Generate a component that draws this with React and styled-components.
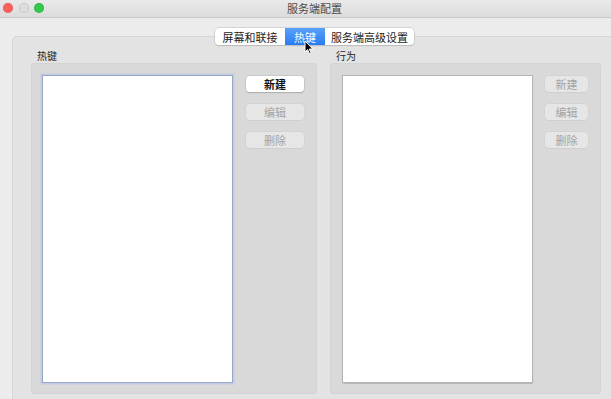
import React from 'react'
import styled, { createGlobalStyle } from 'styled-components'

const GlobalStyle = createGlobalStyle`
  html, body {
    margin: 0;
    padding: 0;
    width: 611px;
    height: 399px;
    overflow: hidden;
    background: #ececec;
  }
  body {
    font-family: "Noto Sans CJK SC", "Noto Sans", sans-serif;
  }
`

const Window = styled.div`
  width: 629px;
  height: 399px;
  background: #ececec;
  display: flex;
  flex-direction: column;
  position: relative;
`

const TitleBar = styled.div`
  height: 17px;
  border-bottom: 1px solid #c9c9c9;
  background: linear-gradient(#e9e9e9, #dcdcdc);
  display: flex;
  align-items: center;
  justify-content: center;
  position: relative;
`

const Lights = styled.div`
  position: absolute;
  left: 3px;
  top: 3px;
  display: flex;
  gap: 5.5px;
`

const Light = styled.span`
  width: 10px;
  height: 10px;
  border-radius: 50%;
  background: ${p => p.color};
  box-shadow: inset 0 0 0 0.5px rgba(0, 0, 0, 0.15);
`

const Title = styled.div`
  font-size: 11px;
  line-height: 17px;
  color: #4a4a4a;
`

const Body = styled.div`
  flex: 1;
  display: flex;
  flex-direction: column;
  align-items: center;
  padding-top: 10px;
`

const Segmented = styled.div`
  display: flex;
  height: 17px;
  background: #fff;
  border-radius: 4px;
  box-shadow: 0 0 0 0.5px #bdbdbd, 0 1px 1px rgba(0, 0, 0, 0.18);
  position: relative;
  z-index: 2;
  overflow: hidden;
`

const Seg = styled.div`
  width: ${p => p.w}px;
  display: flex;
  align-items: center;
  justify-content: center;
  font-size: 11px;
  color: ${p => (p.active ? '#fff' : '#1c1c1c')};
  background: ${p => (p.active ? 'linear-gradient(#5aa0fb, #2a7cf2)' : 'transparent')};
  border-left: ${p => (p.first || p.active || p.afterActive ? 'none' : '1px solid #d6d6d6')};
`

const TabBox = styled.div`
  align-self: stretch;
  margin: -9px 12px 0 12px;
  flex: 1;
  background: #e3e3e3;
  border: 1px solid #d6d6d6;
  border-bottom: none;
  border-radius: 5px 5px 0 0;
  padding: 13px 15px 0 18px;
  display: flex;
  gap: 13px;
`

const Column = styled.div`
  width: ${p => p.w}px;
  display: flex;
  flex-direction: column;
`

const Label = styled.div`
  font-size: 10px;
  line-height: 12px;
  color: #262626;
  padding-left: 6px;
  margin-bottom: 1px;
`

const Group = styled.div`
  height: 331px;
  box-sizing: border-box;
  background: #d9d9d9;
  border-radius: 4px;
  box-shadow: inset 0 0 0 1px #d3d3d3;
  padding: 12px 13px 0 ${p => p.pl}px;
  display: flex;
  gap: ${p => p.gap}px;
`

const List = styled.div`
  width: 191px;
  height: 308px;
  box-sizing: border-box;
  background: #fff;
  border: 1px solid ${p => (p.focused ? '#9aa8c8' : '#b4b4b4')};
  box-shadow: ${p => (p.focused ? '0 0 0 1.5px #c3cce3' : '0 0.5px 1px rgba(0,0,0,0.15)')};
`

const Buttons = styled.div`
  display: flex;
  flex-direction: column;
  gap: 12px;
  margin-top: 1px;
`

const Button = styled.div`
  width: ${p => p.w}px;
  height: 16px;
  box-sizing: border-box;
  border-radius: 4px;
  display: flex;
  align-items: center;
  justify-content: center;
  font-size: 11px;
  font-weight: ${p => (p.enabled ? 700 : 400)};
  color: ${p => (p.enabled ? '#111' : '#a3a3a3')};
  background: ${p => (p.enabled ? '#fff' : '#e6e6e6')};
  box-shadow: ${p =>
    p.enabled
      ? '0 0 0 0.5px #b8b8b8, 0 1px 1px rgba(0,0,0,0.25)'
      : '0 0 0 0.5px #cdcdcd, 0 0.5px 0.5px rgba(0,0,0,0.08)'};
`

const Cursor = styled.svg`
  position: absolute;
  left: 304px;
  top: 40px;
  z-index: 5;
`

const tabs = [
  { label: '屏幕和联接', w: 70 },
  { label: '热键', w: 40 },
  { label: '服务端高级设置', w: 89 },
]

export default function App() {
  return (
    <>
      <GlobalStyle />
      <Window>
        <TitleBar>
          <Lights>
            <Light color="#fc605c" />
            <Light color="#dcdcdc" />
            <Light color="#34c84a" />
          </Lights>
          <Title>服务端配置</Title>
        </TitleBar>
        <Body>
          <Segmented>
            {tabs.map((t, i) => (
              <Seg
                key={t.label}
                w={t.w}
                first={i === 0}
                active={i === 1}
                afterActive={i === 2}
              >
                {t.label}
              </Seg>
            ))}
          </Segmented>
          <TabBox>
            <Column w={286}>
              <Label>热键</Label>
              <Group pl={11} gap={13}>
                <List focused />
                <Buttons>
                  <Button w={58} enabled>新建</Button>
                  <Button w={58}>编辑</Button>
                  <Button w={58}>删除</Button>
                </Buttons>
              </Group>
            </Column>
            <Column w={271}>
              <Label>行为</Label>
              <Group pl={12} gap={12}>
                <List />
                <Buttons>
                  <Button w={43}>新建</Button>
                  <Button w={43}>编辑</Button>
                  <Button w={43}>删除</Button>
                </Buttons>
              </Group>
            </Column>
          </TabBox>
        </Body>
        <Cursor width="10" height="15" viewBox="0 0 10 15">
          <path d="M1 1 L1 12 L3.6 9.6 L5.6 14 L7.2 13.3 L5.3 9 L8.8 9 Z" fill="#000" stroke="#fff" strokeWidth="1" />
        </Cursor>
      </Window>
    </>
  )
}
